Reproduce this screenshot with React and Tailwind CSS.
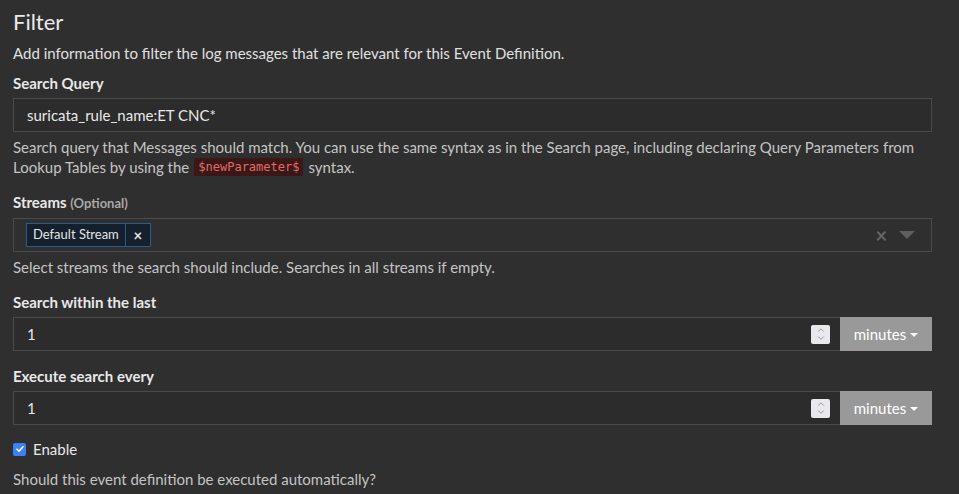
import { ChevronUp, ChevronDown } from 'lucide-react';

function Label({ children }) {
  return <label className="block text-[15px] font-bold text-[#e8e8e8] mb-[5px] leading-5">{children}</label>;
}

function Help({ children, className = '' }) {
  return <p className={`text-[15px] leading-5 text-[#c4c4c4] ${className}`}>{children}</p>;
}

function Spinner() {
  return (
    <div className="w-[19px] h-[19px] bg-[#e9e9ed] rounded-[2px] flex flex-col items-center justify-center text-[#8a8a90]">
      <ChevronUp size={10} strokeWidth={2} className="-mb-[1px]" />
      <ChevronDown size={10} strokeWidth={2} className="-mt-[1px]" />
    </div>
  );
}

function TimeInput({ label, value, className = '' }) {
  return (
    <div className={className}>
      <Label>{label}</Label>
      <div className="flex w-[919px]">
        <div className="flex-1 h-[34px] border border-[#4b4b4b] border-r-0 bg-[#2c2c2c] flex items-center pl-[13px] pr-[10px]">
          <span className="flex-1 text-[15px] text-[#e8e8e8]">{value}</span>
          <Spinner />
        </div>
        <button className="w-[92px] h-[34px] bg-[#999999] text-white text-[15px] flex items-center justify-center gap-[4px]">
          minutes
          <span className="inline-block w-0 h-0 border-x-[4px] border-x-transparent border-t-[4px] border-t-white mt-[1px]" />
        </button>
      </div>
    </div>
  );
}

export default function App() {
  return (
    <div className="w-[959px] h-[494px] overflow-hidden bg-[#2f2f2f] px-[13px] pt-[8px] font-['Lato','Liberation_Sans',sans-serif]">
      <h2 className="text-[22px] leading-[28px] text-[#eaeaea] mb-[7px]">Filter</h2>
      <p className="text-[15px] leading-5 text-[#e0e0e0] mb-[10px]">
        Add information to filter the log messages that are relevant for this Event Definition.
      </p>

      <Label>Search Query</Label>
      <div className="w-[919px] h-[34px] border border-[#4b4b4b] bg-[#2c2c2c] flex items-center px-[13px] text-[15px] text-[#e8e8e8]">
        suricata_rule_name:ET CNC*
      </div>
      <Help className="mt-[5px] mb-[15px]">
        Search query that Messages should match. You can use the same syntax as in the Search page, including declaring Query Parameters from Lookup Tables by using the
        <code className="font-['DejaVu_Sans_Mono',monospace] text-[12px] leading-[18px] text-[#e06b6b] bg-[#3b1716] px-[4px] mx-[5px] inline-block align-top mt-[1px]">$newParameter$</code>
        syntax.
      </Help>

      <Label>
        Streams <span className="text-[13px] text-[#a8a8a8]">(Optional)</span>
      </Label>
      <div className="w-[919px] h-[34px] border border-[#4b4b4b] bg-[#2f2f2f] flex items-center pl-[12px] pr-[16px]">
        <div className="flex h-[24px] border border-[#2e5a88] bg-[#14202c] text-[13px] text-[#e4e4e4]">
          <span className="px-[6px] flex items-center border-r border-[#2e5a88]">Default Stream</span>
          <span className="w-[24px] flex items-center justify-center font-bold text-[15px]">×</span>
        </div>
        <div className="flex-1" />
        <span className="text-[#666] text-[20px] leading-none font-bold mr-[12px]">×</span>
        <span className="inline-block w-0 h-0 border-x-[8px] border-x-transparent border-t-[8px] border-t-[#5e5e5e]" />
      </div>
      <Help className="mt-[5px] mb-[15px]">Select streams the search should include. Searches in all streams if empty.</Help>

      <TimeInput label="Search within the last" value="1" className="mb-[15px]" />
      <TimeInput label="Execute search every" value="1" className="mb-[14px]" />

      <div className="flex items-center gap-[7px] mb-[8px] -mt-[1px]">
        <span className="w-[13px] h-[13px] rounded-[2px] bg-[#3b82f6] flex items-center justify-center">
          <svg width="10" height="10" viewBox="0 0 10 10" fill="none">
            <path d="M2 5.2l2 2L8 2.8" stroke="white" strokeWidth="1.6" strokeLinecap="round" strokeLinejoin="round" />
          </svg>
        </span>
        <span className="text-[15px] text-[#e8e8e8]">Enable</span>
      </div>
      <Help>Should this event definition be executed automatically?</Help>
    </div>
  );
}
